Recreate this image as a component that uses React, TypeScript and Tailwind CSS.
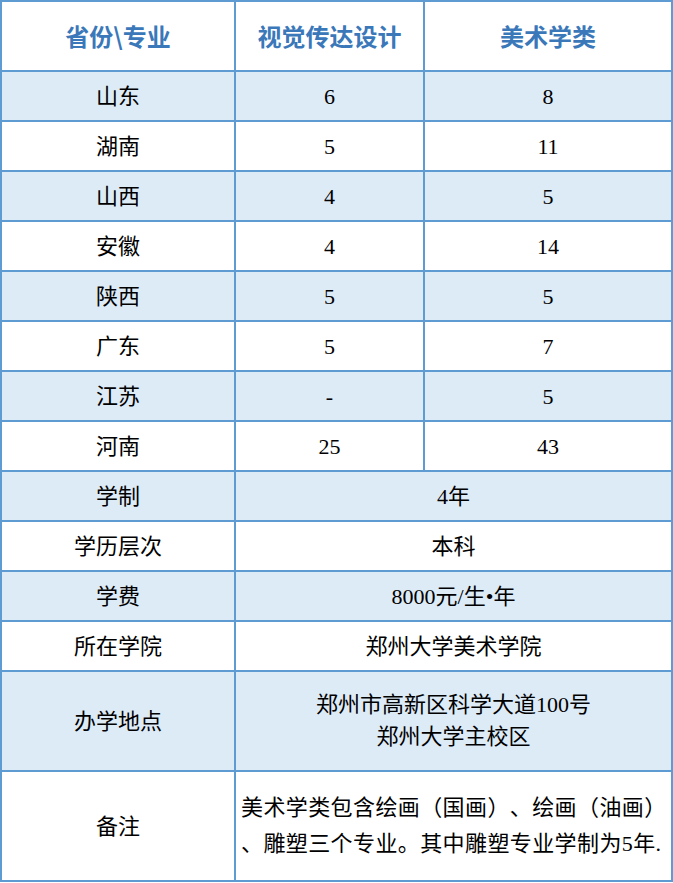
import React from "react";

const rows: [string, string, string][] = [
  ["山东", "6", "8"],
  ["湖南", "5", "11"],
  ["山西", "4", "5"],
  ["安徽", "4", "14"],
  ["陕西", "5", "5"],
  ["广东", "5", "7"],
  ["江苏", "-", "5"],
  ["河南", "25", "43"],
];

const merged: [string, React.ReactNode, string][] = [
  ["学制", "4年", "h-[48px]"],
  ["学历层次", "本科", "h-[48px]"],
  ["学费", "8000元/生•年", "h-[48px]"],
  ["所在学院", "郑州大学美术学院", "h-[48px]"],
  [
    "办学地点",
    <div className="flex flex-col items-center leading-[32px]">
      <span>郑州市高新区科学大道100号</span>
      <span>郑州大学主校区</span>
    </div>,
    "h-[98px]",
  ],
];

export default function App() {
  const font = { fontFamily: '"Liberation Serif", "Noto Sans CJK SC", serif' };
  const head = { fontFamily: '"Noto Sans CJK SC", sans-serif' };
  const cell = "flex items-center justify-center";
  let idx = 0;
  const bg = (i: number) => (i % 2 === 0 ? "bg-[#ddebf7]" : "bg-white");
  return (
    <div
      className="w-[673px] bg-[#5f9bd3] p-[2px] text-black text-[22px] [text-spacing-trim:space-all]"
      style={font}
    >
      <div className="grid grid-cols-[232px_187px_246px] gap-[2px]">
        <div className={`${cell} h-[68px] bg-white text-[#3a78ba] text-[24px] font-bold`} style={head}>省份\专业</div>
        <div className={`${cell} h-[68px] bg-white text-[#3a78ba] text-[24px] font-bold`} style={head}>视觉传达设计</div>
        <div className={`${cell} h-[68px] bg-white text-[#3a78ba] text-[24px] font-bold`} style={head}>美术学类</div>
        {rows.map((r) => {
          const b = bg(idx++);
          return (
            <React.Fragment key={r[0]}>
              <div className={`${cell} h-[48px] ${b}`}>{r[0]}</div>
              <div className={`${cell} h-[48px] ${b}`}>{r[1]}</div>
              <div className={`${cell} h-[48px] ${b}`}>{r[2]}</div>
            </React.Fragment>
          );
        })}
        {merged.map((m) => {
          const b = bg(idx++);
          return (
            <React.Fragment key={m[0]}>
              <div className={`${cell} ${m[2]} ${b}`}>{m[0]}</div>
              <div className={`${cell} ${m[2]} ${b} col-span-2`}>{m[1]}</div>
            </React.Fragment>
          );
        })}
        <div className={`${cell} h-[108px] bg-white`}>备注</div>
        <div className="col-span-2 h-[108px] bg-white flex flex-col justify-center pl-[5px] text-[22px] leading-[36px] tracking-[0.4px] whitespace-nowrap">
          <span>美术学类包含绘画（国画）、绘画（油画）</span>
          <span>、雕塑三个专业。其中雕塑专业学制为5年.</span>
        </div>
      </div>
    </div>
  );
}
